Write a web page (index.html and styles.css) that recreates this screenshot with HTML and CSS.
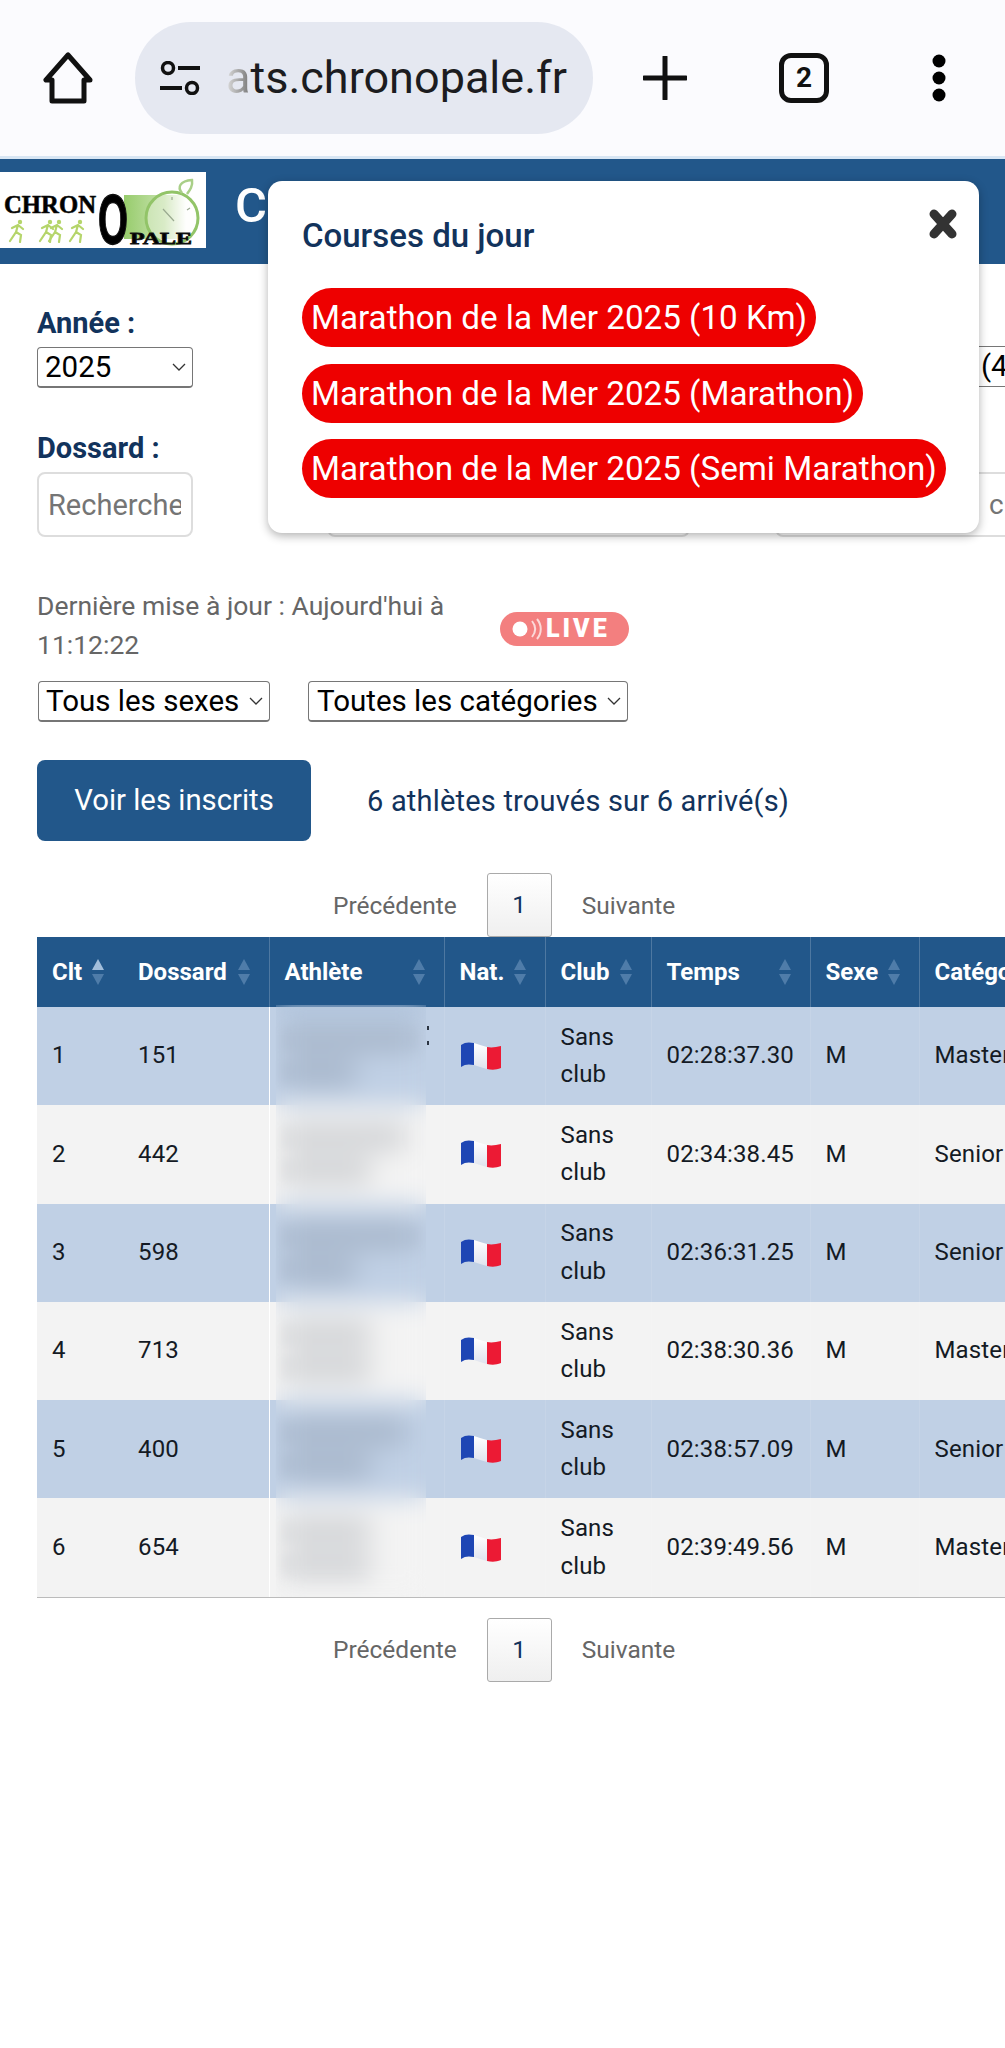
FILE: index.html
```html
<!DOCTYPE html>
<html lang="fr">
<head>
    <meta charset="UTF-8">
    <meta name="viewport" content="width=device-width, initial-scale=1.0">
    <title>Résultats Chronopale</title>
    <link rel="stylesheet" href="styles.css">
</head>
<body>
    <svg class="defs" width="0" height="0">
        <defs>
            <linearGradient id="flagWhite" x1="0" x2="0" y1="0" y2="1">
                <stop offset="0" stop-color="#ffffff"/>
                <stop offset="1" stop-color="#dfe3ee"/>
            </linearGradient>
            <symbol id="flag" viewBox="0 0 41 28">
                <path d="M1 3C5 0 9 0 14 1V23C9 22 5 22 1 25Z" fill="#1e46b4"/>
                <path d="M14 1C18 2 22 4 27 5V27C22 26 18 24 14 23Z" fill="url(#flagWhite)"/>
                <path d="M27 5C32 6 36 5 41 4V26C36 28 32 28 27 27Z" fill="#ec1a34"/>
            </symbol>
            <symbol id="sort" viewBox="0 0 14 26">
                <path d="M7 0L13 11H1Z"/>
                <path d="M7 26L1 15H13Z"/>
            </symbol>
            <symbol id="sort-asc" viewBox="0 0 14 26">
                <path d="M7 0L13 11H1Z" fill="#a3bedb"/>
                <path d="M7 26L1 15H13Z" fill="#4f7ca9"/>
            </symbol>
            <symbol id="runner" viewBox="0 0 18 24">
                <circle cx="12" cy="3" r="2.2" fill="#b5d56a"/>
                <path d="M10 6L8 13L2 22M8 13L13 16L12 23M4 9L10 6L15 10" fill="none" stroke="#b5d56a" stroke-width="2.2" stroke-linecap="round"/>
            </symbol>
        </defs>
    </svg>

    <div class="browser-bar">
        <svg class="icon-home" width="50" height="52" viewBox="0 0 50 52">
            <path d="M25 3L3 28H9V49H41V28H47Z" fill="none" stroke="#111" stroke-width="5" stroke-linejoin="round"/>
        </svg>
        <div class="url-pill">
            <svg width="42" height="34" viewBox="0 0 42 34">
                <circle cx="9" cy="7" r="5.5" fill="none" stroke="#111" stroke-width="3.5"/>
                <path d="M19 7H41M1 27H23" stroke="#111" stroke-width="4"/>
                <circle cx="33" cy="27" r="5.5" fill="none" stroke="#111" stroke-width="3.5"/>
            </svg>
            <span class="url-text"><span class="url-fade">a</span>ts.chronopale.fr</span>
        </div>
        <svg class="icon-plus" width="44" height="44" viewBox="0 0 44 44">
            <path d="M22 1V43M1 22H43" stroke="#111" stroke-width="5" stroke-linecap="round"/>
        </svg>
        <div class="tab-count">2</div>
        <svg class="icon-dots" width="14" height="48" viewBox="0 0 14 48">
            <circle cx="7" cy="7" r="6.5"/>
            <circle cx="7" cy="24" r="6.5"/>
            <circle cx="7" cy="41" r="6.5"/>
        </svg>
    </div>

    <header class="site-header">
        <svg class="logo" width="206" height="76" viewBox="0 0 206 76">
            <defs>
                <linearGradient id="logoGreen" x1="0" x2="1" y1="0" y2="0">
                    <stop offset="0" stop-color="#97cc6c"/>
                    <stop offset=".65" stop-color="#c6e2ac"/>
                    <stop offset="1" stop-color="#ffffff"/>
                </linearGradient>
            </defs>
            <rect width="206" height="76" fill="#fff"/>
            <rect x="124" y="23" width="62" height="44" fill="url(#logoGreen)"/>
            <circle cx="172" cy="46" r="26" fill="#fbfdf8" fill-opacity=".35" stroke="#92c468" stroke-width="3"/>
            <path d="M182 21C177 15 180 9 192 8C193 14 190 18 187 22" fill="none" stroke="#a9cf88" stroke-width="2.5"/>
            <path d="M163 37L174 49M172 25V28M190 36L187 38" fill="none" stroke="#9aaa90" stroke-width="1.2"/>
            <text class="logo-chron" x="4" y="41" textLength="92" lengthAdjust="spacingAndGlyphs">CHRON</text>
            <text class="logo-o" x="98" y="72" textLength="30" lengthAdjust="spacingAndGlyphs">O</text>
            <text class="logo-pale" x="130" y="72" textLength="62" lengthAdjust="spacingAndGlyphs">PALE</text>
            <use href="#runner" x="8" y="47" width="18" height="24"/>
            <use href="#runner" x="38" y="47" width="18" height="24"/>
            <use href="#runner" x="47" y="47" width="18" height="24"/>
            <use href="#runner" x="68" y="47" width="18" height="24"/>
        </svg>
        <span class="page-title">C</span>
    </header>

    <section class="filters">
        <div class="filter-col">
            <label class="filter-label" for="annee">Année :</label>
            <select id="annee" class="native-select year-select"><option>2025</option></select>
            <label class="filter-label second" for="dossard">Dossard :</label>
            <input id="dossard" class="search-input" type="text" placeholder="Recherche">
        </div>
        <div class="filter-col middle">
            <div class="search-input ghost"></div>
        </div>
        <div class="filter-col right">
            <div class="cut-select">(4</div>
            <div class="search-input ghost right-input">c</div>
        </div>
    </section>

    <div class="update-row">
        <p class="update-text">Dernière mise à jour : Aujourd'hui à 11:12:22</p>
        <div class="live-badge">
            <svg width="38" height="24" viewBox="0 0 38 24">
                <circle cx="12" cy="12" r="7.5" fill="#fff"/>
                <path d="M24 4C28 9 28 15 24 20M29 2C34 8 34 16 29 22" fill="none" stroke="#fff" stroke-width="2" opacity=".7"/>
            </svg>
            <span>LIVE</span>
        </div>
    </div>

    <div class="select-row">
        <select class="native-select sex-select"><option>Tous les sexes</option></select>
        <select class="native-select cat-select"><option>Toutes les catégories</option></select>
    </div>

    <div class="action-row">
        <a class="btn-primary">Voir les inscrits</a>
        <span class="found-count">6 athlètes trouvés sur 6 arrivé(s)</span>
    </div>

    <div class="pagination">
        <span>Précédente</span>
        <span class="page-current">1</span>
        <span>Suivante</span>
    </div>

    <div class="table-wrap">
        <table class="results">
            <thead>
                <tr>
                    <th class="c-clt"><span class="th-in">Clt<svg class="sort"><use href="#sort-asc"/></svg></span></th>
                    <th class="c-dos"><span class="th-in">Dossard<svg class="sort"><use href="#sort"/></svg></span></th>
                    <th class="c-ath"><span class="th-in">Athlète<svg class="sort"><use href="#sort"/></svg></span></th>
                    <th class="c-nat"><span class="th-in">Nat.<svg class="sort"><use href="#sort"/></svg></span></th>
                    <th class="c-club"><span class="th-in">Club<svg class="sort"><use href="#sort"/></svg></span></th>
                    <th class="c-time"><span class="th-in">Temps<svg class="sort"><use href="#sort"/></svg></span></th>
                    <th class="c-sex"><span class="th-in">Sexe<svg class="sort"><use href="#sort"/></svg></span></th>
                    <th class="c-cat"><span class="th-in">Catégorie</span></th>
                </tr>
            </thead>
            <tbody>
                <tr><td>1</td><td>151</td><td class="name-cell"><i class="smudge wide"></i><i class="smudge short"></i><i class="name-end"></i></td><td><svg class="flag"><use href="#flag"/></svg></td><td>Sans club</td><td>02:28:37.30</td><td>M</td><td>Master</td></tr>
                <tr><td>2</td><td>442</td><td class="name-cell"><i class="smudge long"></i><i class="smudge mid"></i></td><td><svg class="flag"><use href="#flag"/></svg></td><td>Sans club</td><td>02:34:38.45</td><td>M</td><td>Senior</td></tr>
                <tr><td>3</td><td>598</td><td class="name-cell"><i class="smudge wide"></i><i class="smudge short"></i></td><td><svg class="flag"><use href="#flag"/></svg></td><td>Sans club</td><td>02:36:31.25</td><td>M</td><td>Senior</td></tr>
                <tr><td>4</td><td>713</td><td class="name-cell"><i class="smudge mid"></i><i class="smudge mid"></i></td><td><svg class="flag"><use href="#flag"/></svg></td><td>Sans club</td><td>02:38:30.36</td><td>M</td><td>Master</td></tr>
                <tr><td>5</td><td>400</td><td class="name-cell"><i class="smudge long"></i><i class="smudge mid"></i></td><td><svg class="flag"><use href="#flag"/></svg></td><td>Sans club</td><td>02:38:57.09</td><td>M</td><td>Senior</td></tr>
                <tr><td>6</td><td>654</td><td class="name-cell"><i class="smudge mid"></i><i class="smudge mid"></i></td><td><svg class="flag"><use href="#flag"/></svg></td><td>Sans club</td><td>02:39:49.56</td><td>M</td><td>Master</td></tr>
            </tbody>
        </table>
        <div class="blur-patch"></div>
    </div>

    <div class="pagination bottom">
        <span>Précédente</span>
        <span class="page-current">1</span>
        <span>Suivante</span>
    </div>

    <div class="modal">
        <button class="modal-close" aria-label="Fermer">
            <svg width="30" height="30" viewBox="0 0 30 30">
                <path d="M6 5L24 25M24 5L6 25" stroke="#333" stroke-width="9" stroke-linecap="round"/>
            </svg>
        </button>
        <h2 class="modal-title">Courses du jour</h2>
        <a class="race-pill">Marathon de la Mer 2025 (10 Km)</a>
        <a class="race-pill">Marathon de la Mer 2025 (Marathon)</a>
        <a class="race-pill">Marathon de la Mer 2025 (Semi Marathon)</a>
    </div>
</body>
</html>
```

FILE: styles.css
```css
* {
    box-sizing: border-box;
}
html, body {
    overflow-x: hidden;
}
body {
    margin: 0;
    min-height: 2048px;
    position: relative;
    font-family: Roboto, "Liberation Sans", sans-serif;
    background: #ffffff;
    color: #111111;
}
.defs {
    position: absolute;
}

/* browser toolbar */
.browser-bar {
    height: 159px;
    padding: 22px 0 23px 43px;
    display: flex;
    align-items: center;
    background: #fbfbfe;
    border-bottom: 3px solid #d8e6f4;
}
.icon-home {
    flex: none;
    margin-right: 42px;
}
.url-pill {
    flex: none;
    width: 458px;
    height: 112px;
    padding-left: 24px;
    display: flex;
    align-items: center;
    gap: 25px;
    border-radius: 56px;
    background: #e5e8f1;
    overflow: hidden;
}
.url-text {
    font-size: 45px;
    color: #1c1c20;
    white-space: nowrap;
}
.url-fade {
    background: linear-gradient(90deg, #dddddd, #777777);
    -webkit-background-clip: text;
    background-clip: text;
    color: transparent;
}
.icon-plus {
    flex: none;
    margin-left: 50px;
}
.tab-count {
    flex: none;
    width: 50px;
    height: 50px;
    margin-left: 92px;
    border: 5px solid #111111;
    border-radius: 12px;
    font-size: 28px;
    font-weight: 700;
    line-height: 40px;
    text-align: center;
}
.icon-dots {
    flex: none;
    margin-left: 103px;
}

/* site header */
.site-header {
    height: 105px;
    padding-top: 13px;
    display: flex;
    align-items: flex-start;
    background: #22578a;
}
.logo {
    flex: none;
}
.logo-chron {
    font-family: "Liberation Serif", serif;
    font-size: 26px;
    font-weight: 700;
    stroke: #111111;
    stroke-width: .6;
}
.logo-o {
    font-family: "Liberation Sans", sans-serif;
    font-size: 70px;
    font-weight: 700;
    stroke: #111111;
    stroke-width: 1.5;
}
.logo-pale {
    font-family: "Liberation Serif", serif;
    font-size: 17px;
    font-weight: 700;
    stroke: #111111;
    stroke-width: .8;
}
.page-title {
    margin-left: 29px;
    font-size: 49px;
    font-weight: 500;
    line-height: 68px;
    color: #ffffff;
}

/* filters, mostly hidden by the modal */
.filters {
    height: 322px;
    padding: 0 0 0 37px;
    display: flex;
}
.filter-col {
    width: 156px;
    flex: none;
}
.filter-label {
    display: block;
    height: 33px;
    margin-top: 43px;
    font-size: 29px;
    font-weight: 700;
    line-height: 33px;
    color: #12335c;
}
.filter-label.second {
    margin-top: 44px;
}
.native-select {
    appearance: none;
    font-family: Roboto, "Liberation Sans", sans-serif;
    font-size: 29.5px;
    height: 41px;
    color: #000000;
    background: #ffffff url("data:image/svg+xml,%3Csvg xmlns='http://www.w3.org/2000/svg' width='14' height='8'%3E%3Cpath d='M1 1L7 7L13 1' fill='none' stroke='%23333' stroke-width='1.3'/%3E%3C/svg%3E") no-repeat right 8px center;
    border: 1px solid #767676;
    border-bottom-width: 2px;
    border-radius: 4px;
    padding: 0 0 0 7px;
}
.year-select {
    width: 156px;
    display: block;
    margin-top: 7px;
    background-position: right 6px center;
}
.search-input {
    width: 156px;
    height: 65px;
    display: block;
    margin-top: 7px;
    padding: 0 10px 0 9px;
    font-family: Roboto, "Liberation Sans", sans-serif;
    font-size: 29px;
    background: #ffffff;
    border: 2px solid #dddddd;
    border-radius: 8px;
}
.search-input::placeholder {
    color: #757575;
}
.filter-col.middle {
    width: 363px;
    margin-left: 134px;
    padding-top: 208px;
}
.filter-col.middle .ghost {
    width: 100%;
    margin-top: 0;
}
.filter-col.right {
    width: 260px;
    margin-left: 85px;
    padding-top: 82px;
}
.cut-select {
    height: 41px;
    padding-left: 205px;
    border: 1px solid #767676;
    font-size: 29.5px;
    line-height: 39px;
    color: #000000;
}
.right-input {
    width: 100%;
    margin-top: 85px;
    padding-left: 212px;
    font-size: 28px;
    line-height: 61px;
    color: #757575;
}

/* last update */
.update-row {
    padding-left: 37px;
    display: flex;
    align-items: center;
}
.update-text {
    width: 420px;
    margin: 0;
    font-size: 26.5px;
    line-height: 39px;
    color: #666666;
}
.live-badge {
    margin-left: 43px;
    margin-top: 7px;
    width: 129px;
    height: 34px;
    padding-left: 8px;
    display: flex;
    align-items: center;
    border-radius: 17px;
    background: #f37f7f;
    color: #ffffff;
    font-size: 25px;
    font-weight: 900;
    letter-spacing: 3px;
}
.select-row {
    margin-top: 17px;
    padding-left: 38px;
    display: flex;
    gap: 38px;
}
.sex-select {
    width: 232px;
    background-position: right 6px center;
}
.cat-select {
    width: 320px;
    padding-left: 8px;
    background-position: right 6px center;
}
.action-row {
    margin-top: 38px;
    padding-left: 37px;
    display: flex;
    align-items: center;
}
.btn-primary {
    width: 274px;
    height: 81px;
    display: block;
    border-radius: 8px;
    background: #22578a;
    color: #ffffff;
    font-size: 29.3px;
    line-height: 81px;
    text-align: center;
}
.found-count {
    margin-left: 56px;
    font-size: 29px;
    letter-spacing: .2px;
    color: #12335c;
}

/* pagination */
.pagination {
    margin-top: 32px;
    height: 64px;
    padding-left: 333px;
    display: flex;
    align-items: center;
    gap: 30px;
    font-size: 24.5px;
    color: #666666;
}
.page-current {
    width: 65px;
    height: 64px;
    border: 1px solid #aaaaaa;
    border-radius: 3px;
    background: linear-gradient(#ffffff, #efefef);
    color: #12335c;
    line-height: 62px;
    text-align: center;
}
.pagination.bottom {
    margin-top: 20px;
}

/* results table */
.table-wrap {
    margin-left: 37px;
    position: relative;
    overflow: hidden;
    border-bottom: 1px solid #bbbbbb;
}
.results {
    width: 1040px;
    table-layout: fixed;
    border-collapse: collapse;
    font-size: 24px;
}
.results th {
    height: 70px;
    padding: 0 0 0 15px;
    background: #22578a;
    color: #ffffff;
    font-weight: 700;
    text-align: left;
    white-space: nowrap;
    border-left: 1px solid rgba(255, 255, 255, .2);
}
.th-in {
    display: flex;
    align-items: center;
    justify-content: space-between;
    padding-right: 18px;
}
.c-clt .th-in {
    justify-content: flex-start;
    gap: 9px;
}
.sort {
    width: 14px;
    height: 26px;
    flex: none;
    fill: #4f7ca9;
}
.results th.c-clt,
.results th.c-dos {
    border-left: none;
}
.c-clt { width: 86px; }
.c-dos { width: 146px; }
.c-ath { width: 175px; }
.c-nat { width: 101px; }
.c-club { width: 106px; }
.c-time { width: 159px; }
.c-sex { width: 109px; }
.c-cat { width: 158px; }
.results td {
    height: 98.3px;
    padding: 0 8px 0 15px;
    line-height: 37.5px;
    letter-spacing: .15px;
    color: #141a24;
    border-left: 1px solid rgba(255, 255, 255, .1);
}
.results td:first-child,
.results td:nth-child(2) {
    border-left: none;
}
.results tbody tr:nth-child(odd) td {
    background: #c0d0e5;
}
.results tbody tr:nth-child(even) td {
    background: #f3f3f3;
}
.flag {
    width: 41px;
    height: 28px;
    display: block;
}
.name-cell {
    position: relative;
}
/* tips of the last letter, just outside the blur */
.name-end {
    position: absolute;
    left: 157px;
    top: 19px;
    width: 2px;
    height: 4px;
    background: #2b3442;
    box-shadow: 0 15px 0 #2b3442;
}
.smudge {
    display: block;
    height: 24px;
    margin: 10px 0;
    background: rgba(60, 70, 85, .2);
    filter: blur(5px);
}
.smudge.wide {
    width: 130px;
}
.smudge.long {
    width: 120px;
}
.smudge.mid {
    width: 85px;
}
.smudge.short {
    width: 70px;
}

/* privacy blur over the names */
.blur-patch {
    position: absolute;
    left: 239px;
    top: 68px;
    bottom: 0;
    width: 150px;
    backdrop-filter: blur(13px);
}

/* modal */
.modal {
    position: absolute;
    left: 268px;
    top: 181px;
    width: 711px;
    height: 352px;
    padding: 31px 0 0 34px;
    background: #ffffff;
    border-radius: 14px;
    box-shadow: 0 3px 10px rgba(0, 0, 0, .3);
}
.modal-close {
    position: absolute;
    top: 28px;
    right: 21px;
    padding: 0;
    border: none;
    background: none;
    line-height: 0;
}
.modal-title {
    margin: 0 0 28px;
    font-size: 33px;
    font-weight: 500;
    line-height: 48px;
    color: #12335c;
}
.race-pill {
    display: table;
    height: 59px;
    margin-bottom: 16.5px;
    padding: 0 9px;
    border-radius: 30px;
    background: #ee0000;
    color: #ffffff;
    font-size: 33.2px;
    line-height: 59px;
    white-space: nowrap;
}
```
